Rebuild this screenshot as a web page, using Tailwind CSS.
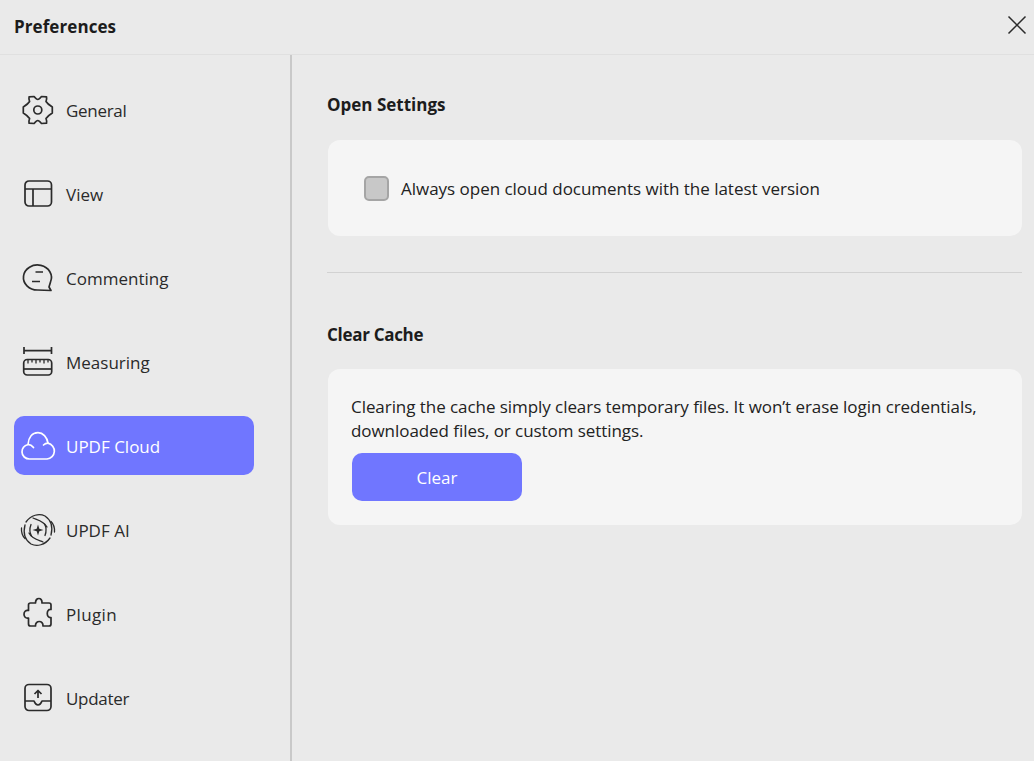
<!DOCTYPE html>
<html lang="en">
<head>
  <meta charset="UTF-8" />
  <title>Preferences</title>
  <script src="https://cdn.jsdelivr.net/npm/@tailwindcss/browser@4"></script>
</head>
<body class="bg-[#eaeaea] font-['Open_Sans',sans-serif] text-[#222222]">
  <div class="flex flex-col w-[1034px] h-[761px] overflow-hidden">
    <!-- Title bar -->
    <header class="flex items-center justify-between h-[55px] shrink-0 pl-[14px] pr-[7px] pb-[4px] border-b border-[#e0e0e0]">
      <h1 class="pt-[3px] text-[17px] font-bold text-[#1c1c1c] tracking-[0.08px]">Preferences</h1>
      <svg class="w-[20px] h-[20px]" viewBox="0 0 20 20" fill="none" stroke="#2b2b2b" stroke-width="1.5"><path d="M1.5 1.5l17 17M18.5 1.5l-17 17"/></svg>
    </header>

    <div class="flex flex-1 min-h-0">
      <!-- Sidebar -->
      <nav class="w-[292px] shrink-0 border-r-[2px] border-[#c9c9c9] pt-[25px] pl-[14px] flex flex-col gap-[24px]">
        <a class="flex items-center gap-[10px] w-[240px] h-[60px] pl-[6px] text-[17px] text-[#2a2a2a]">
          <svg class="w-[36px] h-[36px]" viewBox="0 0 36 36" fill="none" stroke="#2b2b2b" stroke-width="1.7" stroke-linejoin="round"><path d="M21.500 4.500L26.500 4.800Q27 7 26 9.500Q27.500 12 32.300 15V21Q27.500 24 26 26.500Q27 29 26.500 31.200L21.500 31.500Q19 28.500 17.800 28.500Q16.600 28.500 14.100 31.500L9.100 31.200Q8.600 29 9.600 26.500Q8.100 24 3.300 21V15Q8.100 12 9.600 9.500Q8.600 7 9.100 4.800L14.100 4.500Q16.600 7.500 17.800 7.500Q19 7.500 21.500 4.500z"/><circle cx="17.800" cy="18" r="4"/></svg>
          <span class="pt-[2px] tracking-[-0.3px]">General</span>
        </a>
        <a class="flex items-center gap-[10px] w-[240px] h-[60px] pl-[6px] text-[17px] text-[#2a2a2a]">
          <svg class="w-[36px] h-[36px]" viewBox="0 0 36 36" fill="none" stroke="#2b2b2b" stroke-width="1.7"><rect x="5" y="5" width="26.500" height="25" rx="4"/><path d="M5 13h26.500M13 13v17"/></svg>
          <span class="pt-[2px]">View</span>
        </a>
        <a class="flex items-center gap-[10px] w-[240px] h-[60px] pl-[6px] text-[17px] text-[#2a2a2a]">
          <svg class="w-[36px] h-[36px]" viewBox="0 0 36 36" fill="none" stroke="#2b2b2b" stroke-width="1.7" stroke-linejoin="round"><path d="M17.500 30a14 12.500 0 1 1 13-8l-1.500 5 2 3.500z"/><path d="M15.500 12h7.500M12 21.500h8"/></svg>
          <span class="pt-[2px]">Commenting</span>
        </a>
        <a class="flex items-center gap-[10px] w-[240px] h-[60px] pl-[6px] text-[17px] text-[#2a2a2a]">
          <svg class="w-[36px] h-[36px]" viewBox="0 0 36 36" fill="none" stroke="#2b2b2b" stroke-width="1.7"><path d="M4 3v7M31.500 3v7M4 6.700h27.500"/><rect x="3.700" y="15.500" width="28" height="15.500" rx="3.500"/><path d="M3.700 25h28" /><path d="M8 15.500v4M12 15.500v3M16 15.500v4M20 15.500v3M24 15.500v4M28 15.500v3" stroke-width="1.300"/></svg>
          <span class="pt-[2px]">Measuring</span>
        </a>
        <a class="flex items-center gap-[10px] w-[240px] h-[59px] mb-[1px] pl-[6px] bg-[#7076ff] rounded-[10px] text-[17px] text-white">
          <svg class="w-[36px] h-[36px]" viewBox="0 0 36 36" fill="none" stroke="#ffffff" stroke-width="1.7" stroke-linejoin="round" stroke-linecap="round"><path d="M9.500 31H27a8 8 0 0 0 1-15.800C27 9 23 4.700 18 4.700C12 4.700 8.500 9.500 8 16.500C4.500 17.500 2 20.500 2 24C2 28 5.500 31 9.500 31z"/><path d="M8 16.500C10 16.500 12 17.500 13.500 19.500M28 15.200C26 15.200 24.500 16 23.500 17"/></svg>
          <span class="pt-[2px]">UPDF Cloud</span>
        </a>
        <a class="flex items-center gap-[10px] w-[240px] h-[60px] pl-[6px] text-[17px] text-[#2a2a2a]">
          <svg class="w-[36px] h-[36px]" viewBox="0 0 36 36" fill="none" stroke="#2b2b2b" stroke-width="1.300" stroke-linecap="round"><path d="M6 10C11 3 19 1 25 4C31 8 33 15 31 23"/><path d="M30 26C25 33 17 35 11 32C5 28 3 21 5 13"/><path d="M1.500 16c-.3 4 1 8 3.500 10.500M34.500 20c.3-4-1-8-3.500-10.500"/><path d="M11 12.500c-1.500 4-1.500 8 .5 11.500M25 23.500c1.500-4 1.500-8-.5-11.500"/><path d="M13 6C18 8 24 9 27 15M23 30C18 28 12 27 9 21"/><path d="M18 12.500l1.300 4.200 4.200 1.300-4.200 1.300-1.300 4.200-1.300-4.200-4.200-1.300 4.200-1.300z" fill="#2b2b2b" stroke="none"/></svg>
          <span class="pt-[2px]">UPDF AI</span>
        </a>
        <a class="flex items-center gap-[10px] w-[240px] h-[60px] pl-[6px] text-[17px] text-[#2a2a2a]">
          <svg class="w-[36px] h-[36px]" viewBox="0 0 36 36" fill="none" stroke="#2b2b2b" stroke-width="1.7" stroke-linejoin="round"><path d="M10.500 7H15.500c0-6 7-6 6.500 0H29a2 2 0 0 1 2 2V13.500c-5-1-5 9 0 8V28a2 2 0 0 1-2 2H23c.5-6-8-6-7.500 0H10.500a2 2 0 0 1-2-2V22c-6 1.500-6-9 0-7.500V9a2 2 0 0 1 2-2z"/></svg>
          <span class="pt-[2px] tracking-[0.35px]">Plugin</span>
        </a>
        <a class="flex items-center gap-[10px] w-[240px] h-[60px] pl-[6px] text-[17px] text-[#2a2a2a]">
          <svg class="w-[36px] h-[36px]" viewBox="0 0 36 36" fill="none" stroke="#2b2b2b" stroke-width="1.7" stroke-linejoin="round"><rect x="5" y="4.500" width="26" height="26" rx="4"/><path d="M5 21h9c1 2.500 2.500 4 4 4s3-1.500 4-4h9"/><path d="M18 18v-7M14.500 14l3.500-3.500 3.500 3.500"/></svg>
          <span class="pt-[2px] tracking-[-0.3px]">Updater</span>
        </a>
      </nav>

      <!-- Content -->
      <main class="flex-1 pl-[35px] pr-[12px] pt-[36px]">
        <h2 class="text-[17px] font-bold leading-[28px] text-[#1c1c1c]">Open Settings</h2>
        <section class="mt-[21px] ml-[1px] h-[96px] bg-[#f5f5f5] rounded-[12px] flex items-center pl-[36px] gap-[12px]">
          <span class="w-[25px] h-[25px] rounded-[5px] bg-[#c8c8c8] border-2 border-[#a5a5a5]"></span>
          <span class="pt-[2px] text-[17px] tracking-[-0.02px]">Always open cloud documents with the latest version</span>
        </section>

        <hr class="mt-[36px] border-[#d2d2d2]" />

        <h2 class="mt-[48px] text-[17px] font-bold leading-[28px] text-[#1c1c1c] tracking-[-0.3px]">Clear Cache</h2>
        <section class="mt-[20px] ml-[1px] h-[156px] bg-[#f5f5f5] rounded-[12px] pl-[23px] pr-[20px] pt-[26px]">
          <p class="text-[17px] leading-[24px] tracking-[-0.06px]">Clearing the cache simply clears temporary files. It won’t erase login credentials, downloaded files, or custom settings.</p>
          <button class="block mt-[10px] ml-[1px] w-[170px] h-[48px] pt-[2px] bg-[#7076ff] rounded-[10px] text-[17px] text-white">Clear</button>
        </section>
      </main>
    </div>
  </div>
</body>
</html>
